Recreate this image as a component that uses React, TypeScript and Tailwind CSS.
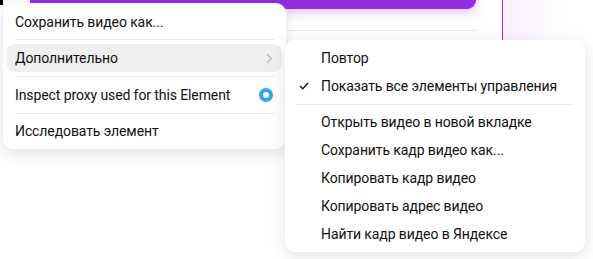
import React from 'react';

const font = { fontFamily: 'Roboto, "Noto Sans", sans-serif' };

function Separator({ className = '' }: { className?: string }) {
  return <div className={`h-px bg-[#e6e6e6] mx-[12px] ${className}`} />;
}

function LeftMenu() {
  return (
    <div className="absolute left-[3px] top-[3px] w-[283px] rounded-[10px] bg-white pt-[5px] pb-[4px] shadow-[0_4px_16px_rgba(0,0,0,0.12)] text-[14px] tracking-[-0.1px] text-[#111]">
      <div className="h-[28px] flex items-center px-[12px]">Сохранить видео как...</div>
      <Separator className="mt-[3px] mb-[4px]" />
      <div className="h-[28px] mx-[4px] rounded-[8px] bg-[#efefef] flex items-center justify-between pl-[8px] pr-[9px]">
        <span>Дополнительно</span>
        <svg width="7" height="11" viewBox="0 0 7 11" fill="none">
          <path d="M1 1l4.5 4.5L1 10" stroke="#b5b5b5" strokeWidth="1.3" />
        </svg>
      </div>
      <Separator className="my-[4px]" />
      <div className="h-[28px] flex items-center justify-between pl-[12px] pr-[13px]">
        <span>Inspect proxy used for this Element</span>
        <span className="w-[14px] h-[14px] rounded-full border-[4px] border-[#33a5ea]" />
      </div>
      <Separator className="mt-[4px] mb-[3px]" />
      <div className="h-[28px] flex items-center px-[12px]">Исследовать элемент</div>
    </div>
  );
}

function SubMenu() {
  const items = [
    'Открыть видео в новой вкладке',
    'Сохранить кадр видео как...',
    'Копировать кадр видео',
    'Копировать адрес видео',
    'Найти кадр видео в Яндексе',
  ];
  return (
    <div className="absolute left-[285px] top-[40px] w-[300px] rounded-[10px] bg-white py-[4px] shadow-[0_4px_16px_rgba(0,0,0,0.12)] text-[14px] tracking-[-0.1px] text-[#111]">
      <div className="h-[28px] flex items-center pl-[36px]">Повтор</div>
      <div className="h-[28px] flex items-center pl-[14px]">
        <svg width="10" height="8" viewBox="0 0 10 8" fill="none" className="mr-[12px]">
          <path d="M1 4l2.8 2.8L9 1" stroke="#111" strokeWidth="1.4" />
        </svg>
        <span>Показать все элементы управления</span>
      </div>
      <Separator className="mt-[4px] mb-[3px]" />
      {items.map((t) => (
        <div key={t} className="h-[28px] flex items-center pl-[36px]">{t}</div>
      ))}
    </div>
  );
}

export default function App() {
  return (
    <div className="relative w-[593px] h-[259px] bg-white overflow-hidden" style={font}>
      <div className="absolute left-0 top-0 w-[3px] h-[5px] bg-black" />
      <div className="absolute left-[30px] top-[-10px] w-[446px] h-[19px] rounded-br-[9px] bg-[#922de0] shadow-[0_4px_10px_rgba(146,45,224,0.25)]" />
      <div className="absolute left-[287px] top-[30px] w-[191px] h-px bg-[#ebebeb]" />
      <div className="absolute left-[502px] top-0 w-px h-[40px] bg-[#9b30e0]" />
      <div className="absolute left-[503px] top-0 w-[60px] h-[40px] bg-gradient-to-r from-[#f8effd] to-white" />
      <LeftMenu />
      <SubMenu />
    </div>
  );
}
